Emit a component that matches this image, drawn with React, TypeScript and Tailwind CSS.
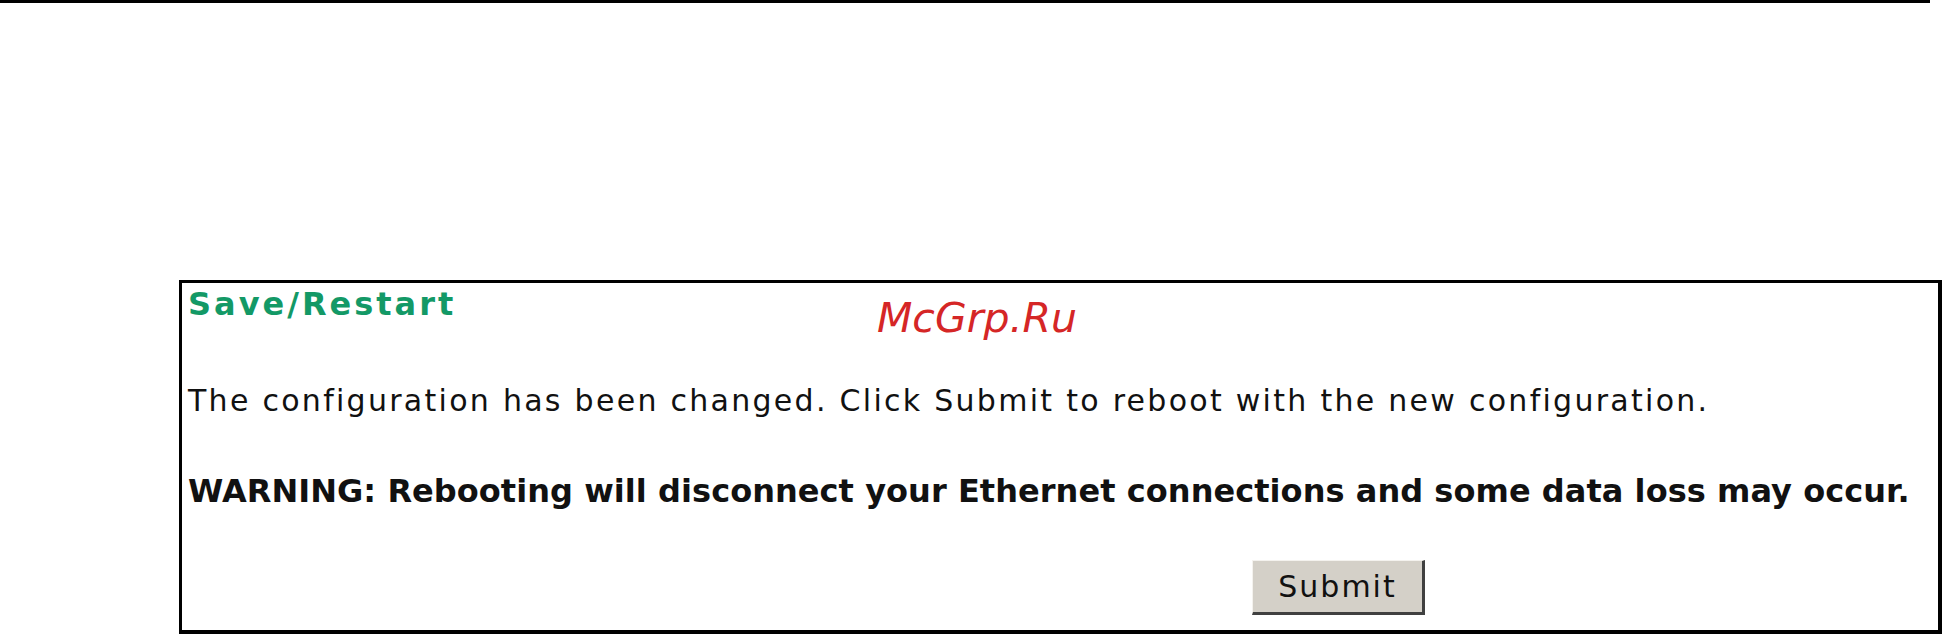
import React from "react";

export default function App() {
  return (
    <div className="relative h-[634px] w-[1942px] overflow-hidden bg-white" style={{ fontFamily: '"DejaVu Sans", Verdana, sans-serif' }}>
      <div className="h-[3px] w-[1930px] bg-black" />
      <div className="ml-[179px] mt-[277px] h-[354px] w-[1763px] border-l-[3px] border-t-[3px] border-r-4 border-b-4 border-black">
        <div className="relative pl-[6px]">
          <div className="pt-[3px] text-[32px] font-bold leading-[36px] tracking-[3px] text-[#139966]">Save/Restart</div>
          <div className="absolute left-[695px] top-[12px] text-[41px] italic leading-[46px] text-[#d52626]">McGrp.Ru</div>
          <div className="mt-[62px] text-[30px] leading-[34px] tracking-[2.28px] text-[#111]">
            The configuration has been changed. Click Submit to reboot with the new configuration.
          </div>
          <div className="mt-[56px] text-[32px] font-bold leading-[34px] tracking-[0.05px] text-[#111]">
            WARNING: Rebooting will disconnect your Ethernet connections and some data loss may occur.
          </div>
          <div className="ml-[1064px] mt-[52px]">
            <button className="flex h-[55px] w-[173px] items-center justify-center border-b-[3px] border-r-[3px] border-l border-t border-b-[#404040] border-r-[#404040] border-l-[#f4f2ee] border-t-[#f4f2ee] bg-[#d4d0c8] text-[30px] leading-none tracking-[2px] text-[#111]" style={{ fontFamily: '"DejaVu Sans", Verdana, sans-serif' }}>
              Submit
            </button>
          </div>
        </div>
      </div>
    </div>
  );
}
